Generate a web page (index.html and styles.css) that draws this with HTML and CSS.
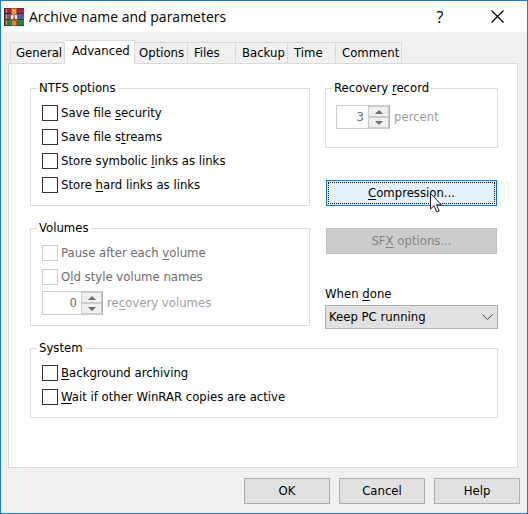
FILE: index.html
```html
<!DOCTYPE html>
<html lang="en">
<head>
    <meta charset="UTF-8">
    <meta name="viewport" content="width=device-width, initial-scale=1.0">
    <title>Archive name and parameters</title>
    <link rel="stylesheet" href="styles.css">
</head>
<body>
    <header class="titlebar">
        <svg class="app-icon" width="20" height="18" viewBox="0 0 20 18" shape-rendering="crispEdges">
            <rect x="0" y="0" width="20" height="6" fill="#a8234f"/>
            <rect x="0" y="0" width="20" height="1" fill="#8a1a3c"/>
            <rect x="0" y="5" width="20" height="1" fill="#6a1232"/>
            <rect x="0" y="6" width="20" height="6" fill="#5560b0"/>
            <rect x="0" y="11" width="20" height="1" fill="#2e3470"/>
            <rect x="0" y="12" width="20" height="6" fill="#2a7d48"/>
            <rect x="0" y="17" width="20" height="1" fill="#174a2a"/>
            <rect x="0" y="0" width="1" height="18" fill="#4a2028"/>
            <rect x="2" y="1" width="1" height="4" fill="#e0a030"/>
            <rect x="2" y="7" width="1" height="4" fill="#e0a030"/>
            <rect x="2" y="13" width="1" height="4" fill="#e0a030"/>
            <rect x="7" y="0" width="6" height="18" fill="#a85a20"/>
            <rect x="8" y="1" width="4" height="5" fill="#f0a63c"/>
            <rect x="6" y="6" width="8" height="6" fill="#8a5a40"/>
            <rect x="7" y="7" width="2" height="4" fill="#efeae4"/>
            <rect x="11" y="7" width="2" height="4" fill="#efeae4"/>
            <rect x="9" y="4" width="2" height="6" fill="#e2902b"/>
            <rect x="8" y="13" width="4" height="4" fill="#d98a2b"/>
        </svg>
        <h1>Archive name and parameters</h1>
        <button class="caption-btn" type="button" aria-label="Help">?</button>
        <button class="caption-btn" type="button" aria-label="Close">
            <svg width="13" height="13" viewBox="0 0 13 13"><path d="M.5 .5l12 12M12.5 .5l-12 12" stroke="#000" stroke-width="1.2"/></svg>
        </button>
    </header>

    <nav class="tabs">
        <button class="tab general" type="button">General</button>
        <button class="tab advanced active" type="button">Advanced</button>
        <button class="tab options" type="button">Options</button>
        <button class="tab files" type="button">Files</button>
        <button class="tab backup" type="button">Backup</button>
        <button class="tab time" type="button">Time</button>
        <button class="tab comment" type="button">Comment</button>
    </nav>

    <main class="page">
        <div class="column">
            <fieldset>
                <legend>NTFS options</legend>
                <div class="rows">
                    <label class="check"><input type="checkbox"><span>Save file <u>s</u>ecurity</span></label>
                    <label class="check"><input type="checkbox"><span>Save file s<u>t</u>reams</span></label>
                    <label class="check"><input type="checkbox"><span>Store symbolic <u>l</u>inks as links</span></label>
                    <label class="check"><input type="checkbox"><span>Store <u>h</u>ard links as links</span></label>
                </div>
            </fieldset>

            <fieldset class="volumes">
                <legend>Volumes</legend>
                <div class="rows">
                    <label class="check disabled"><input type="checkbox" disabled><span>Pause after each <u>v</u>olume</span></label>
                    <label class="check disabled"><input type="checkbox" disabled><span>O<u>l</u>d style volume names</span></label>
                </div>
                <div class="spin-row">
                    <div class="spin wide">
                        <input type="text" id="recvol" value="0" disabled>
                        <div class="arrows">
                            <button type="button" aria-label="More" disabled><svg width="8" height="4" viewBox="0 0 8 4"><path d="M0 4L4 0l4 4z" fill="#6d6d6d"/></svg></button>
                            <button type="button" aria-label="Less" disabled><svg width="8" height="4" viewBox="0 0 8 4"><path d="M0 0l4 4 4-4z" fill="#6d6d6d"/></svg></button>
                        </div>
                    </div>
                    <label for="recvol">re<u>c</u>overy volumes</label>
                </div>
            </fieldset>
        </div>

        <div class="column side">
            <fieldset class="recovery">
                <legend>Recovery <u>r</u>ecord</legend>
                <div class="spin-row">
                    <div class="spin">
                        <input type="text" id="percent" value="3" disabled>
                        <div class="arrows">
                            <button type="button" aria-label="More" disabled><svg width="8" height="4" viewBox="0 0 8 4"><path d="M0 4L4 0l4 4z" fill="#6d6d6d"/></svg></button>
                            <button type="button" aria-label="Less" disabled><svg width="8" height="4" viewBox="0 0 8 4"><path d="M0 0l4 4 4-4z" fill="#6d6d6d"/></svg></button>
                        </div>
                    </div>
                    <label for="percent">percent</label>
                </div>
            </fieldset>

            <div class="actions">
                <div class="hovered">
                    <button class="btn focus" type="button"><u>C</u>ompression...</button>
                    <svg class="pointer" width="13" height="20" viewBox="0 0 13 20"><path d="M.5 .5v15.500l3.500-3.300 2.700 6.300 2.500-1-2.700-6.200h5z" fill="#fff" stroke="#1a1a2a" stroke-width="1"/></svg>
                </div>
                <button class="btn" type="button" disabled>SF<u>X</u> options...</button>
            </div>

            <label for="done">When <u>d</u>one</label>
            <div class="select">
                <select id="done">
                    <option>Keep PC running</option>
                </select>
                <svg width="11" height="6" viewBox="0 0 11 6"><path d="M.5 .5l5 5 5-5" fill="none" stroke="#444"/></svg>
            </div>
        </div>

        <fieldset class="system">
            <legend>System</legend>
            <div class="rows">
                <label class="check"><input type="checkbox"><span><u>B</u>ackground archiving</span></label>
                <label class="check"><input type="checkbox"><span><u>W</u>ait if other WinRAR copies are active</span></label>
            </div>
        </fieldset>
    </main>

    <footer class="footer">
        <button class="btn" type="button">OK</button>
        <button class="btn" type="button">Cancel</button>
        <button class="btn" type="button">Help</button>
    </footer>
</body>
</html>
```
FILE: styles.css
```css
* {
    box-sizing: border-box;
}
body {
    margin: 0;
    min-height: 100vh;
    display: flex;
    flex-direction: column;
    border: 1px solid #1979ca;
    background: #f0f0f0;
    color: #000;
}
body, button, input, select {
    font-family: "DejaVu Sans Condensed", "Noto Sans", sans-serif;
    font-size: 13px;
    line-height: 16px;
}
u {
    text-underline-offset: 2px;
    text-decoration-thickness: 1px;
    text-decoration-skip-ink: none;
}

/* title bar */
.titlebar {
    display: flex;
    align-items: center;
    height: 31px;
    padding: 0 7px 0 3px;
    background: #fff;
}
.titlebar h1 {
    flex: 1;
    margin: 0 0 0 5px;
    font-family: "Open Sans", sans-serif;
    font-size: 14px;
    font-weight: normal;
    line-height: 20px;
}
.caption-btn {
    width: 46px;
    padding: 0;
    border: none;
    background: none;
    font-family: "Open Sans", sans-serif;
    font-size: 16px;
    line-height: 20px;
}
.caption-btn + .caption-btn {
    margin-left: 11px;
}
.caption-btn svg {
    display: block;
    margin: 0 auto;
}

/* tabs */
.tabs {
    display: flex;
    align-items: flex-end;
    margin: 8px 0 -1px 9px;
}
.tab {
    height: 22px;
    padding: 0 0 0 6px;
    border: 1px solid #d9d9d9;
    border-left: none;
    background: #f0f0f0;
    text-align: left;
}
.tab:first-child {
    border-left: 1px solid #d9d9d9;
    padding-left: 5px;
}
.tab.active {
    position: relative;
    height: 24px;
    padding: 0 0 3px 7px;
    border-bottom: none;
    background: #fff;
}
.general {
    width: 55px;
}
.advanced {
    width: 70px;
}
.options {
    width: 53px;
    padding-left: 4px;
}
.files {
    width: 48px;
}
.backup {
    width: 52px;
}
.time {
    width: 48px;
}
.comment {
    width: 66px;
}

/* tab page */
.page {
    flex: 1;
    display: grid;
    grid-template-columns: 280fr 173fr;
    gap: 11px 15px;
    align-content: start;
    margin: 0 9px 0 7px;
    padding: 16px 19px 16px 21px;
    border: 1px solid #d9d9d9;
    background: #fff;
}
.column {
    display: flex;
    flex-direction: column;
}
fieldset {
    margin: 0;
    min-width: 0;
    padding: 9px 6px 12px;
    border: 1px solid #dcdcdc;
}
legend {
    padding: 0 2px;
}
.volumes {
    margin-top: 14px;
    padding-bottom: 10px;
}
.recovery {
    padding-bottom: 18px;
}
.system {
    grid-column: 1 / -1;
}
.rows {
    display: flex;
    flex-direction: column;
    align-items: flex-start;
    gap: 8px;
    margin-left: 5px;
}
.check {
    display: flex;
    align-items: center;
    gap: 3px;
}
.check input {
    appearance: none;
    width: 16px;
    height: 16px;
    margin: 0;
    border: 1px solid #333;
    background: #fff;
}
.disabled {
    color: #6d6d6d;
}
.disabled input {
    border-color: #ccc;
}

/* number boxes */
.spin-row {
    display: flex;
    align-items: center;
    gap: 4px;
    margin-left: 4px;
    color: #a0a0a0;
}
.volumes .spin-row {
    margin: 6px 0 0 5px;
}
.spin {
    display: flex;
    width: 54px;
    height: 24px;
    border: 1px solid #ccc;
    border-right-color: #adadb2;
}
.spin.wide {
    width: 61px;
}
.spin input {
    flex: 1;
    min-width: 0;
    padding: 0 4px;
    border: none;
    background: #fff;
    color: #6d6d6d;
    text-align: right;
}
.arrows {
    display: flex;
    flex-direction: column;
    width: 21px;
}
.arrows button {
    flex: 1;
    display: flex;
    align-items: center;
    justify-content: center;
    padding: 0;
    border: 1px solid #ccc;
    background: #f0f0f0;
}

/* buttons */
.btn {
    display: block;
    height: 26px;
    padding: 0;
    border: 1px solid #adadad;
    background: #e1e1e1;
    color: #000;
}
.btn:disabled {
    border-color: #bfbfbf;
    background: #ccc;
    color: #838383;
}
.btn.focus {
    border-color: #0078d7;
    background: #e5f1fb;
    outline: 1px dotted #000;
    outline-offset: -3px;
}
.actions {
    display: flex;
    flex-direction: column;
    gap: 22px;
    margin: 32px 1px;
}
.hovered {
    position: relative;
}
.hovered .btn {
    width: 100%;
}
.pointer {
    position: absolute;
    left: 104px;
    top: 13px;
}

/* drop-down */
.select {
    position: relative;
    margin-top: 3px;
}
.select select {
    appearance: none;
    display: block;
    width: 100%;
    height: 24px;
    padding: 0 24px 0 3px;
    border: 1px solid #adadad;
    border-radius: 0;
    background: #e1e1e1;
    color: #000;
}
.select svg {
    position: absolute;
    right: 5px;
    top: 9px;
    pointer-events: none;
}

.footer {
    display: flex;
    justify-content: flex-end;
    gap: 9px;
    padding: 10px 7px 9px;
}
.footer .btn {
    width: 86px;
}
```
